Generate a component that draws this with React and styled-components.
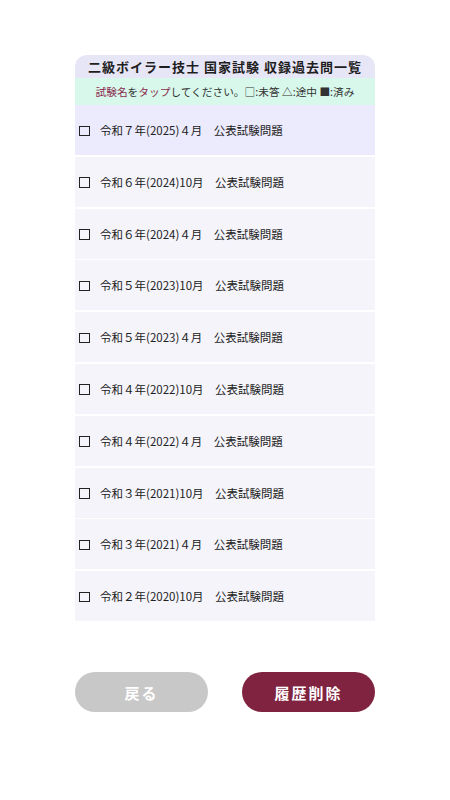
import React, { useState } from "react";
import styled, { createGlobalStyle } from "styled-components";

const GlobalStyle = createGlobalStyle`
  body {
    margin: 0;
    background: #ffffff;
    font-family: "Noto Sans CJK JP", "Noto Sans", sans-serif;
    color: #222;
  }
`;

const exams = [
  "令和７年(2025)４月",
  "令和６年(2024)10月",
  "令和６年(2024)４月",
  "令和５年(2023)10月",
  "令和５年(2023)４月",
  "令和４年(2022)10月",
  "令和４年(2022)４月",
  "令和３年(2021)10月",
  "令和３年(2021)４月",
  "令和２年(2020)10月",
];

const App = () => {
  const [selected, setSelected] = useState(0);

  return (
    <Page>
      <GlobalStyle />
      <Panel>
        <Title>二級ボイラー技士 国家試験 収録過去問一覧</Title>
        <Notice>
          <Accent>試験名</Accent>を<Accent>タップ</Accent>してください。□:未答 △:途中 ■:済み
        </Notice>
        <List>
          {exams.map((name, i) => (
            <Row key={name} active={i === selected} onClick={() => setSelected(i)}>
              <Box />
              <RowText>{name}　公表試験問題</RowText>
            </Row>
          ))}
        </List>
      </Panel>
      <Buttons>
        <Button variant="back">戻る</Button>
        <Button variant="delete">履歴削除</Button>
      </Buttons>
    </Page>
  );
};

export default App;

const Page = styled.div`
  width: 300px;
  margin: 0 auto;
  padding-top: 55px;
  display: flex;
  flex-direction: column;
`;

const Panel = styled.div`
  display: flex;
  flex-direction: column;
`;

const Title = styled.div`
  height: 23px;
  background: #e7e6f7;
  border-radius: 12px 12px 0 0;
  display: flex;
  align-items: center;
  justify-content: center;
  font-size: 13px;
  font-weight: 700;
  letter-spacing: 1px;
  color: #1e1e1e;
`;

const Notice = styled.div`
  height: 27px;
  background: #d8f8ec;
  display: flex;
  align-items: center;
  justify-content: center;
  font-size: 10.7px;
  color: #333;
`;

const Accent = styled.span`
  color: #8a2c4c;
`;

const List = styled.div`
  display: flex;
  flex-direction: column;
  gap: 1.8px;
`;

const Row = styled.div`
  height: 50px;
  background: ${(props) => (props.active ? "#ecebfd" : "#f5f4fb")};
  display: flex;
  align-items: center;
  padding-left: 4px;
  cursor: pointer;
`;

const Box = styled.span`
  box-sizing: border-box;
  width: 10.5px;
  height: 10.5px;
  border: 1.4px solid #222;
  margin: 1.5px 10.5px 0 0;
  flex-shrink: 0;
`;

const RowText = styled.span`
  font-size: 11.5px;
  color: #222;
`;

const Buttons = styled.div`
  display: flex;
  justify-content: space-between;
  margin-top: 51px;
`;

const Button = styled.button`
  width: 133px;
  height: 40px;
  border: none;
  border-radius: 20px;
  font-family: "Noto Sans CJK JP", sans-serif;
  font-size: 15px;
  font-weight: 700;
  letter-spacing: 2px;
  color: #fff;
  background: ${(props) => (props.variant === "delete" ? "#7f2340" : "#c8c8c8")};
  cursor: pointer;
`;
